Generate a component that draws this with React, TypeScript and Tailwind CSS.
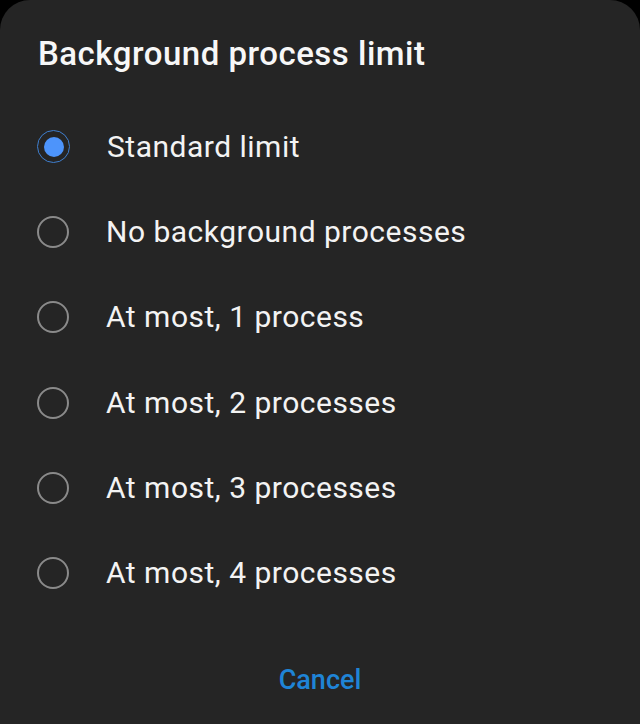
const options = [
  "Standard limit",
  "No background processes",
  "At most, 1 process",
  "At most, 2 processes",
  "At most, 3 processes",
  "At most, 4 processes",
];

function Radio({ checked }: { checked: boolean }) {
  if (checked) {
    return (
      <span className="flex h-[33px] w-[33px] shrink-0 items-center justify-center rounded-full border-[1.5px] border-[#3f7fcf]">
        <span className="h-[20px] w-[20px] rounded-full bg-[#4d94fb]" />
      </span>
    );
  }
  return <span className="h-[32px] w-[32px] shrink-0 rounded-full border-2 border-[#8a8a8a]" />;
}

export default function App() {
  const selected = 0;

  return (
    <div className="h-[724px] w-[640px] overflow-hidden bg-black font-['Roboto',sans-serif]">
      <div className="h-[760px] w-full rounded-[30px] bg-[#252525] pt-[34px]">
        <h1 className="pl-[38px] text-[33px] leading-[40px] font-medium tracking-[0.5px] text-[#f7f7f7]">
          Background process limit
        </h1>

        <ul className="mt-[30px]">
          {options.map((label, i) => (
            <li key={label} className="flex h-[85.3px] items-center gap-[37px] pl-[37px]">
              <Radio checked={i === selected} />
              <span className="text-[30px] leading-[36px] tracking-[0.5px] text-[#f3f3f3]">{label}</span>
            </li>
          ))}
        </ul>

        <div className="mt-[46px] flex justify-center">
          <button className="h-[36px] text-[27px] leading-[36px] font-medium text-[#1f84d6]">
            Cancel
          </button>
        </div>
      </div>
    </div>
  );
}
